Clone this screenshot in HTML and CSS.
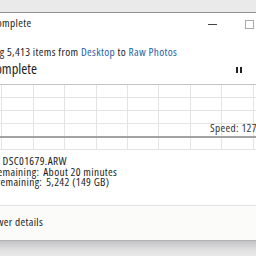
FILE: index.html
```html
<!DOCTYPE html>
<html>
<head>
<meta charset="utf-8">
<link rel="stylesheet" href="styles.css">
</head>
<body>
<div class="screen">
  <div class="window">
    <div class="titlebar">
      <span class="title">12% complete</span>
      <div class="controls">
        <span class="cap"><span class="min"></span></span>
        <span class="cap"><span class="max"></span></span>
        <span class="cap"><span class="close">✕</span></span>
      </div>
    </div>
    <div class="body">
      <p class="summary">Copying 5,413 items from <span class="link">Desktop</span> to <span class="link">Raw Photos</span></p>
      <div class="head-row">
        <h1 class="heading">12% complete</h1>
        <span class="pause"><span class="bar"></span><span class="bar"></span></span>
      </div>
      <div class="chart">
        <div class="speed-line"></div>
        <span class="speed">Speed: 127 MB/s</span>
      </div>
      <div class="details">
        <div class="row"><span class="label">Name:</span><span class="value">DSC01679.ARW</span></div>
        <div class="row"><span class="label">Time remaining:</span><span class="value">About 20 minutes</span></div>
        <div class="row"><span class="label">Items remaining:</span><span class="value">5,242 (149 GB)</span></div>
      </div>
    </div>
    <div class="footer">
      <svg class="chev" width="12" height="12" viewBox="0 0 12 12"><circle cx="6" cy="6" r="5.5" fill="none" stroke="#555"/><path d="M3.5 7 L6 4.5 L8.5 7" fill="none" stroke="#555"/></svg>
      <span>Fewer details</span>
    </div>
  </div>
  <div class="shadow"></div>
</div>
</body>
</html>
```
FILE: styles.css
```css
html, body {
  margin: 0;
  padding: 0;
}
body {
  width: 256px;
  height: 256px;
  overflow: hidden;
  background: #eaeaea;
  font-family: "Open Sans", "Noto Sans", sans-serif;
  font-stretch: 75%;
  font-size: 11.3px;
  letter-spacing: 0.35px;
  color: #1c1c1c;
}
.screen {
  padding-top: 12px;
}
.window {
  margin-left: -40px;
  width: 345px;
  background: #fff;
  border-top: 1px solid #8f8f8f;
  border-bottom: 1px solid #b3b3b6;
}
.titlebar {
  display: flex;
  justify-content: space-between;
  height: 33px;
}
.title {
  padding-left: 12px;
  padding-top: 4px;
  line-height: 12px;
  color: #222;
}
.controls {
  display: flex;
}
.cap {
  width: 37px;
  height: 20px;
  display: flex;
  align-items: center;
  justify-content: center;
}
.min {
  width: 9px;
  height: 1px;
  background: #444;
  margin-top: 2px;
}
.max {
  width: 7px;
  height: 7px;
  border: 1px solid #a8a8a8;
  margin-top: 2px;
}
.close {
  font-size: 10px;
  color: #444;
}
.body {
  padding-left: 11px;
}
.summary {
  margin: 0;
  line-height: 12px;
}
.link {
  color: #2a5fa5;
}
.head-row {
  display: flex;
  align-items: center;
  justify-content: space-between;
  width: 271px;
  margin-top: 2px;
}
.heading {
  margin: 0 0 0 -5px;
  font-weight: normal;
  font-size: 14.5px;
  letter-spacing: 0;
  line-height: 18px;
  color: #1e1e1e;
}
.pause {
  display: flex;
  gap: 2px;
  padding-top: 2px;
}
.bar {
  width: 2px;
  height: 6px;
  background: #222;
}
.chart {
  position: relative;
  margin-top: 6px;
  width: 314px;
  height: 65px;
  border-top: 1px solid #c4c4c4;
  background-color: #fff;
  background-image:
    repeating-linear-gradient(to right, transparent 0, transparent 30.4px, #e4e4e4 30.4px, #e4e4e4 31.4px),
    repeating-linear-gradient(to bottom, transparent 0, transparent 12px, #e4e4e4 12px, #e4e4e4 13px);
}
.speed-line {
  position: absolute;
  left: 0;
  right: 0;
  top: 51px;
  height: 2px;
  background: #a3a3a3;
}
.speed {
  position: absolute;
  right: 3px;
  top: 37px;
  line-height: 12px;
  color: #333;
}
.details {
  padding-top: 6px;
  padding-bottom: 17px;
}
.row {
  line-height: 10.7px;
  display: flex;
  gap: 4px;
}
.footer {
  border-top: 1px solid #e2e2e2;
  background: #fbfbf9;
  height: 24px;
  padding-top: 10px;
  display: flex;
  align-items: flex-start;
  gap: 6px;
  padding-left: 9px;
  line-height: 12px;
}
.chev {
  flex: none;
}
.shadow {
  height: 16px;
  background: linear-gradient(to bottom, #c3c3c6, #e2e2e2 60%, #eaeaea);
}
```
